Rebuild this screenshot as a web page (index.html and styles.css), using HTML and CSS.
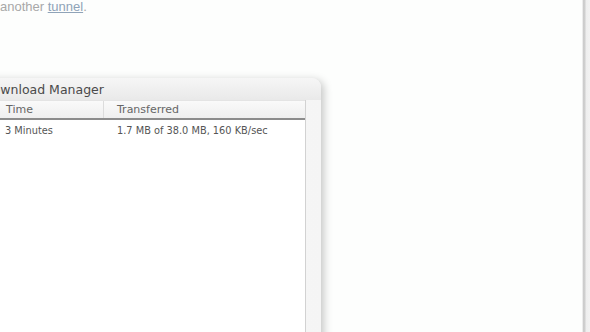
FILE: index.html
```html
<!DOCTYPE html>
<html>
<head>
<meta charset="utf-8">
<link rel="stylesheet" href="styles.css">
</head>
<body>
<div class="screen">
  <div class="page">
    <p class="intro">another <a class="link" href="#">tunnel</a>.</p>
    <div class="window">
      <div class="titlebar"><span class="title">Download Manager</span></div>
      <div class="frame">
        <div class="list">
          <div class="head">
            <div class="col c1">Time</div>
            <div class="col c2">Transferred</div>
          </div>
          <div class="row">
            <div class="cell c1">3 Minutes</div>
            <div class="cell c2">1.7 MB of 38.0 MB, 160 KB/sec</div>
          </div>
        </div>
      </div>
    </div>
  </div>
  <div class="edge"></div>
</div>
</body>
</html>
```
FILE: styles.css
```css
html, body { margin: 0; padding: 0; }
body { width: 590px; height: 332px; overflow: hidden; background: #fff; font-family: "DejaVu Sans", sans-serif; }
.screen { display: flex; height: 332px; }
.page { position: relative; width: 582px; background: #fdfefd; }
.intro { margin: 0; font-family: "Liberation Sans", sans-serif; font-size: 13px; line-height: 13px; color: #a8a8a8; }
.link { color: #8fa3b8; text-decoration: underline; }
.edge { width: 8px; background: linear-gradient(to right, #ececec 0, #ececec 1px, #cbcbcb 1px, #d0d0d0 3px, #eeeeee 4px, #f2f2f2 8px); }
.window { position: absolute; left: -40px; top: 78px; width: 361px; height: 270px; border-radius: 0 9px 0 0; background: #f3f3f3; box-shadow: 3px 2px 8px rgba(0,0,0,0.22); display: flex; flex-direction: column; }
.titlebar { height: 22px; display: flex; align-items: center; padding-left: 23px; border-radius: 0 9px 0 0; background: linear-gradient(#f6f6f6, #e9e9e9); }
.title { font-size: 12.5px; color: #4a4a4a; }
.frame { flex: 1; padding: 0 15px 0 0; background: linear-gradient(to right, #fbfbfb, #f5f5f5); }
.list { height: 100%; background: #fff; border-right: 1px solid #d2d2d2; }
.head { display: flex; height: 17px; background: linear-gradient(#fafafa, #efefef); border-bottom: 2px solid #8c8c8c; border-top: 1px solid #e4e4e4; }
.col { font-size: 11px; color: #666; display: flex; align-items: center; }
.head .c1 { width: 97px; padding-left: 46px; border-right: 1px solid #dcdcdc; }
.head .c2 { padding-left: 13px; }
.row { display: flex; height: 20px; align-items: center; }
.cell { font-size: 9.8px; color: #555; }
.row .c1 { width: 98px; padding-left: 45px; }
.row .c2 { padding-left: 14px; }
```
